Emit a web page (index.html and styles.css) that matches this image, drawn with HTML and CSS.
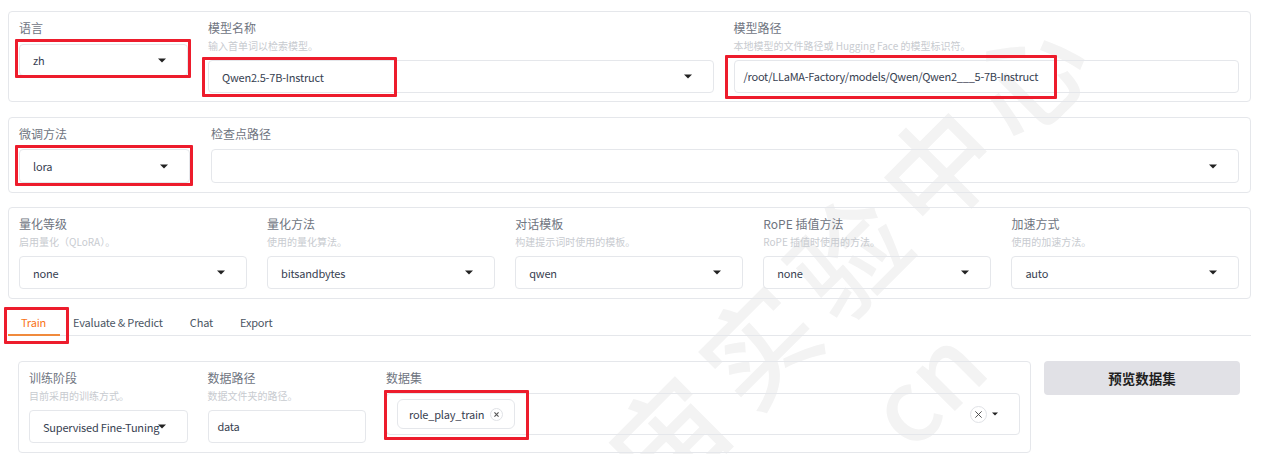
FILE: index.html
```html
<!DOCTYPE html>
<html lang="zh">
<head>
<meta charset="utf-8">
<title>LLaMA-Factory</title>
<link rel="stylesheet" href="styles.css">
</head>
<body>
<div class="wm-layer">
  <div class="watermark wm-main">宙实验中心</div>
  <div class="watermark wm-cn">cn</div>
</div>

<main class="page">
  <section class="panel row-top">
    <div class="field w-lang">
      <span class="label">语言</span>
      <div class="box select lang-box"><span class="value">zh</span><svg class="caret" viewBox="0 0 8 5"><path d="M0 0.5h8L4 4.5z"/></svg></div>
    </div>
    <div class="field grow">
      <span class="label">模型名称</span>
      <span class="hint">输入首单词以检索模型。</span>
      <div class="box select"><span class="value">Qwen2.5-7B-Instruct</span><svg class="caret" viewBox="0 0 8 5"><path d="M0 0.5h8L4 4.5z"/></svg></div>
    </div>
    <div class="field grow">
      <span class="label">模型路径</span>
      <span class="hint">本地模型的文件路径或 Hugging Face 的模型标识符。</span>
      <div class="box text"><span class="value">/root/LLaMA-Factory/models/Qwen/Qwen2___5-7B-Instruct</span></div>
    </div>
  </section>

  <section class="panel row-mid">
    <div class="field w-lora">
      <span class="label">微调方法</span>
      <div class="box select tall"><span class="value">lora</span><svg class="caret" viewBox="0 0 8 5"><path d="M0 0.5h8L4 4.5z"/></svg></div>
    </div>
    <div class="field grow">
      <span class="label">检查点路径</span>
      <div class="box select tall"><span class="value"></span><svg class="caret" viewBox="0 0 8 5"><path d="M0 0.5h8L4 4.5z"/></svg></div>
    </div>
  </section>

  <section class="panel row-five">
    <div class="field grow">
      <span class="label">量化等级</span>
      <span class="hint">启用量化（QLoRA）。</span>
      <div class="box select"><span class="value">none</span><svg class="caret" viewBox="0 0 8 5"><path d="M0 0.5h8L4 4.5z"/></svg></div>
    </div>
    <div class="field grow">
      <span class="label">量化方法</span>
      <span class="hint">使用的量化算法。</span>
      <div class="box select"><span class="value">bitsandbytes</span><svg class="caret" viewBox="0 0 8 5"><path d="M0 0.5h8L4 4.5z"/></svg></div>
    </div>
    <div class="field grow">
      <span class="label">对话模板</span>
      <span class="hint">构建提示词时使用的模板。</span>
      <div class="box select"><span class="value">qwen</span><svg class="caret" viewBox="0 0 8 5"><path d="M0 0.5h8L4 4.5z"/></svg></div>
    </div>
    <div class="field grow">
      <span class="label">RoPE 插值方法</span>
      <span class="hint">RoPE 插值时使用的方法。</span>
      <div class="box select"><span class="value">none</span><svg class="caret" viewBox="0 0 8 5"><path d="M0 0.5h8L4 4.5z"/></svg></div>
    </div>
    <div class="field grow">
      <span class="label">加速方式</span>
      <span class="hint">使用的加速方法。</span>
      <div class="box select"><span class="value">auto</span><svg class="caret" viewBox="0 0 8 5"><path d="M0 0.5h8L4 4.5z"/></svg></div>
    </div>
  </section>

  <nav class="tabs">
    <span class="tab active">Train</span>
    <span class="tab">Evaluate &amp; Predict</span>
    <span class="tab">Chat</span>
    <span class="tab">Export</span>
  </nav>

  <div class="train">
    <section class="panel train-panel">
      <div class="field w-stage">
        <span class="label">训练阶段</span>
        <span class="hint">目前采用的训练方式。</span>
        <div class="box select"><span class="value">Supervised Fine-Tuning</span><svg class="caret" viewBox="0 0 8 5"><path d="M0 0.5h8L4 4.5z"/></svg></div>
      </div>
      <div class="field w-stage">
        <span class="label">数据路径</span>
        <span class="hint">数据文件夹的路径。</span>
        <div class="box text"><span class="value">data</span></div>
      </div>
      <div class="field grow">
        <span class="label">数据集</span>
        <div class="box dataset">
          <span class="chip">role_play_train<span class="chip-x"><svg viewBox="0 0 8 8"><path d="M2.5 2.5l3 3M5.500 2.500l-3 3"/></svg></span></span>
          <span class="clear"><svg viewBox="0 0 10 10"><path d="M1.500 1.500l7 7M8.500 1.500l-7 7"/></svg></span>
          <svg class="caret small" viewBox="0 0 8 5"><path d="M0 0.5h8L4 4.5z"/></svg>
        </div>
      </div>
    </section>
    <button class="preview" type="button">预览数据集</button>
  </div>
</main>

<div class="mark m1"></div>
<div class="mark m2"></div>
<div class="mark m3"></div>
<div class="mark m4"></div>
<div class="mark m5"></div>
<div class="mark m6"></div>
</body>
</html>
```

FILE: styles.css
```css
* { box-sizing: border-box; }

html, body {
  margin: 0;
  height: 454px;
  overflow: hidden;
  background: #fff;
}

body {
  position: relative;
  font-family: "Noto Sans CJK SC", "Noto Sans", sans-serif;
  color: #374151;
}

.page {
  position: relative;
  height: 454px;
  overflow: hidden;
  padding: 11px 12px 0 8px;
}

.panel {
  display: flex;
  border: 1px solid #e5e7eb;
  border-radius: 4px;
  padding: 0 11px 0 10px;
}

.row-top {
  height: 91px;
  gap: 20px;
  margin-bottom: 15px;
}

.row-mid {
  height: 76px;
  gap: 21px;
  margin-bottom: 14px;
}

.row-five {
  height: 92px;
  gap: 20.5px;
}

.field {
  display: flex;
  flex-direction: column;
  min-width: 0;
}

.grow { flex: 1 1 0; }
.w-lang { width: 169px; flex: none; }
.w-lora { width: 171px; flex: none; }
.w-stage { width: 158.5px; flex: none; }

.label {
  font-size: 12px;
  line-height: 16px;
  margin-top: 8px;
  color: #6f757f;
}

.hint {
  font-size: 10px;
  line-height: 14px;
  margin-top: 3px;
  margin-bottom: 7px;
  color: #c8cbd0;
}

.w-lang .label { margin-bottom: 8px; }
.w-lora .label,
.row-mid .grow .label { margin-bottom: 7px; }
.train-panel .grow .label { margin-bottom: 7px; }

.box {
  display: flex;
  align-items: center;
  height: 33px;
  border: 1px solid #e5e7eb;
  border-radius: 4px;
  font-size: 11px;
  letter-spacing: -0.2px;
}

.select { padding: 0 21px 0 13px; justify-content: space-between; }
.text { padding: 0 9px; }
.text .value { letter-spacing: -0.24px; }
.lang-box { height: 32px; }
.tall { height: 34px; }

.value {
  white-space: nowrap;
  color: #374151;
}

.text .value { position: relative; top: -1px; }

.caret {
  width: 8px;
  height: 5px;
  flex: none;
  fill: #222;
}

.w-stage .select .value { margin-right: -8px; }

.tabs {
  display: flex;
  height: 37px;
  padding-top: 12px;
  border-bottom: 1px solid #e5e7eb;
  font-size: 11px;
  letter-spacing: -0.18px;
  color: #4b5563;
}

.tab { padding: 3px 13px 0 14px; line-height: 16px; }
.tab:nth-child(2) { padding-left: 13px; }

.tab.active {
  color: #f97316;
  padding-left: 13px;
  padding-right: 0;
  margin-bottom: -1px;
  width: 52px;
  flex: none;
  border-bottom: 2px solid #f08a3c;
}

.train {
  display: flex;
  gap: 13px;
  margin-top: 25px;
  padding-left: 10px;
  margin-right: 11px;
  align-items: flex-start;
}

.train-panel {
  flex: 1 1 0;
  min-width: 0;
  height: 92px;
  gap: 20px;
  padding: 0 10px;
}

.dataset {
  height: 42px;
  padding: 0 10px;
}

.chip {
  display: inline-flex;
  align-items: center;
  height: 30px;
  padding: 0 11px;
  border: 1px solid #e5e7eb;
  border-radius: 6px;
  color: #374151;
}

.chip-x {
  width: 13px;
  height: 13px;
  flex: none;
  margin-left: 6px;
  border: 1px solid #e0e2e6;
  border-radius: 50%;
  display: flex;
}

.chip-x svg { width: 100%; height: 100%; }
.chip-x path { stroke: #555; stroke-width: 0.8; fill: none; }

.clear {
  width: 17px;
  height: 17px;
  flex: none;
  margin-left: auto;
  margin-right: 5px;
  border: 1px solid #e0e2e6;
  border-radius: 50%;
  padding: 3px;
  display: flex;
}

.clear svg { width: 100%; height: 100%; }
.clear path { stroke: #444; stroke-width: 1; fill: none; }

.caret.small { width: 6px; height: 4px; margin-right: 11px; }

.preview {
  width: 196px;
  height: 34px;
  flex: none;
  border: none;
  border-radius: 4px;
  background: #e1e1e6;
  font-family: inherit;
  font-size: 13.5px;
  font-weight: 700;
  color: #1f1f1f;
}

.wm-layer {
  position: absolute;
  inset: 0;
  overflow: hidden;
}

.watermark {
  position: absolute;
  color: #f3f3f3;
  white-space: nowrap;
  transform: rotate(-45deg);
  line-height: 1;
  font-weight: 500;
}

.wm-main {
  left: 500px;
  top: 192px;
  width: 700px;
  font-size: 112px;
  letter-spacing: 15px;
  text-align: center;
}

.wm-cn {
  left: 865px;
  top: 333px;
  font-size: 100px;
}

.mark {
  position: absolute;
  border: 3px solid #ed1c2c;
  border-radius: 1px;
}

.m1 { left: 15px; top: 39px; width: 176px; height: 39px; }
.m2 { left: 202px; top: 57px; width: 195px; height: 40px; }
.m3 { left: 725px; top: 55px; width: 332px; height: 44px; }
.m4 { left: 15px; top: 145px; width: 178px; height: 41px; }
.m5 { left: 4px; top: 307px; width: 65px; height: 37px; }
.m6 { left: 384px; top: 390px; width: 145px; height: 50px; }
```
